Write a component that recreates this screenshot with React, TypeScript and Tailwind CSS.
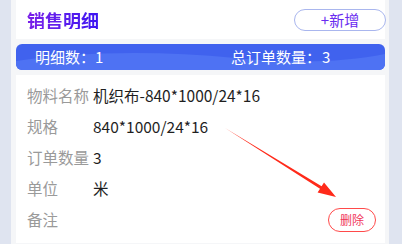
import React from "react";

const rows = [
  { label: "物料名称", value: "机织布-840*1000/24*16" },
  { label: "规格", value: "840*1000/24*16" },
  { label: "订单数量", value: "3" },
  { label: "单位", value: "米" },
];

export default function App() {
  return (
    <div
      className="relative w-[402px] h-[244px] overflow-hidden bg-[#dfe4f0] pl-[11px] pr-[13px]"
      style={{ fontFamily: '"Microsoft YaHei", "Noto Sans CJK SC", "Noto Sans", sans-serif' }}
    >
      <div className="h-full bg-[#f5f6f8] pl-[5px] pr-[4px]">
        {/* header */}
        <div className="h-[39px] bg-white flex items-center justify-between pl-[11px] pr-[-1px]">
          <span className="text-[18px] font-bold leading-none bg-gradient-to-r from-[#7a1ee8] to-[#3b12f2] bg-clip-text text-transparent">
            销售明细
          </span>
          <button className="w-[92px] h-[22px] -mr-[1px] rounded-full border border-[#a9b6ee] flex items-center justify-center text-[15px] leading-none text-[#6a2cf0]">
            +新增
          </button>
        </div>

        {/* summary bar */}
        <div className="relative mt-[5px] h-[26px] rounded-[6px] overflow-hidden bg-[#4062ee] text-white text-[15px]">
          <svg className="absolute inset-0" width="100%" height="26" viewBox="0 0 370 26" preserveAspectRatio="none">
            <path d="M0 17 C 60 8, 140 6, 220 14 C 280 20, 330 18, 370 10 L370 26 L0 26 Z" fill="#4e72f3" />
          </svg>
          <div className="relative h-full flex items-center pl-[19px]">
            <span className="w-[60px]">明细数：</span>
            <span className="w-[136px]">1</span>
            <span className="w-[91px]">总订单数量：</span>
            <span>3</span>
          </div>
        </div>

        {/* detail card */}
        <div className="mt-[5px] bg-white pt-[5px] pb-[8px] pl-[11px] pr-[9px]">
          {rows.map((r) => (
            <div key={r.label} className="h-[31px] flex items-center text-[15.5px]">
              <span className="w-[66px] text-[#9a9a9a]">{r.label}</span>
              <span className="text-[#1f1f1f]">{r.value}</span>
            </div>
          ))}
          <div className="h-[31px] flex items-center justify-between text-[15.5px]">
            <span className="w-[66px] text-[#9a9a9a]">备注</span>
            <button className="w-[48px] h-[24px] rounded-full border border-[#ff4a4a] flex items-center justify-center text-[12px] leading-none text-[#f0355a]">
              删除
            </button>
          </div>
        </div>
      </div>

      {/* red annotation arrow */}
      <svg className="absolute inset-0 pointer-events-none" width="402" height="244" viewBox="0 0 402 244">
        <polygon
          points="225,128 321.6,186.2 324,182.4 336,197 317.6,192.6 320,188.8"
          fill="#ff2a1a"
        />
      </svg>
    </div>
  );
}
